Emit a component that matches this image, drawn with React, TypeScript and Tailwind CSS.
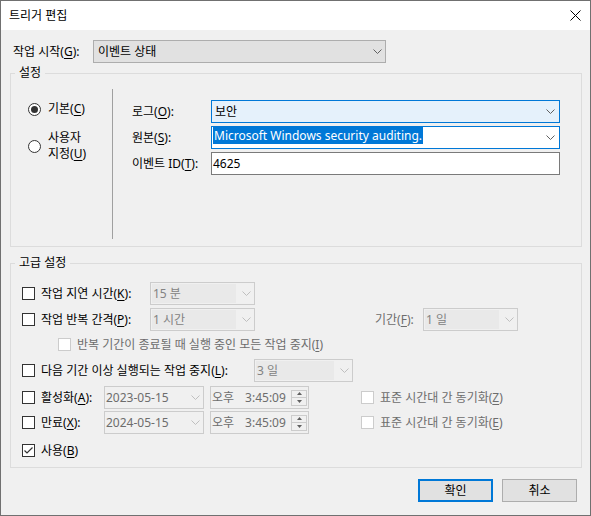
import React from 'react';

function Chevron({ color = '#606060' }: { color?: string }) {
  return (
    <svg width="9" height="5" viewBox="0 0 9 5" className="shrink-0">
      <polyline points="0.5,0.5 4.5,4.5 8.5,0.5" fill="none" stroke={color} strokeWidth="1" />
    </svg>
  );
}

// accelerator key letter
function K({ children }: { children: React.ReactNode }) {
  return <span className="underline decoration-1 underline-offset-[2px]">{children}</span>;
}

function CheckBox({ checked = false, disabled = false }: { checked?: boolean; disabled?: boolean }) {
  return (
    <span
      className={`flex h-[13px] w-[13px] shrink-0 items-center justify-center border bg-white ${
        disabled ? 'border-[#cccccc]' : 'border-[#333333]'
      }`}
    >
      {checked && (
        <svg width="11" height="11" viewBox="0 0 11 11">
          <polyline points="1.5,5.5 4,8 9.5,2.5" fill="none" stroke="#333333" strokeWidth="1.2" />
        </svg>
      )}
    </span>
  );
}

function Radio({ checked = false }: { checked?: boolean }) {
  return (
    <span className="flex h-[13px] w-[13px] shrink-0 items-center justify-center rounded-full border border-[#333333] bg-white">
      {checked && <span className="h-[7px] w-[7px] rounded-full bg-[#333333]" />}
    </span>
  );
}

function DisabledCombo({ text, className }: { text: string; className: string }) {
  return (
    <div className={`flex h-[23px] shrink-0 items-center border border-[#cccccc] bg-[#f0f0f0] pl-[1px] pr-[3px] ${className}`}>
      <span className="h-[19px] flex-1 bg-[#e9e9e9] pl-[1px] leading-[19px] text-[#838383]">{text}</span>
      <span className="ml-[6px]">
        <Chevron color="#bfbfbf" />
      </span>
    </div>
  );
}

function DateBox({ text }: { text: string }) {
  return (
    <div className="flex h-[23px] w-[100px] shrink-0 items-center border border-[#cccccc] pl-[1px] pr-[3px]">
      <span className="flex-1 text-[#6d6d6d]">{text}</span>
      <Chevron color="#bfbfbf" />
    </div>
  );
}

function TimeBox() {
  return (
    <div className="ml-[6px] flex h-[23px] w-[99px] shrink-0 items-center border border-[#cccccc] pl-[1px] pr-[1px] text-[#6d6d6d]">
      <span>오후</span>
      <span className="ml-[11px]">3:45:09</span>
      <div className="ml-auto flex h-[16px] w-[16px] flex-col">
        <span className="flex h-[8px] items-center justify-center border border-[#cccccc] bg-[#f0f0f0]">
          <svg width="5" height="3" viewBox="0 0 5 3">
            <path d="M2.5 0L5 3H0Z" fill="#606060" />
          </svg>
        </span>
        <span className="flex h-[8px] items-center justify-center border border-t-0 border-[#cccccc] bg-[#f0f0f0]">
          <svg width="5" height="3" viewBox="0 0 5 3">
            <path d="M0 0H5L2.5 3Z" fill="#606060" />
          </svg>
        </span>
      </div>
    </div>
  );
}

export default function App() {
  return (
    <div className="flex h-[516px] w-[591px] flex-col overflow-hidden border border-[#707070] bg-[#f0f0f0] font-['Noto_Sans','Noto_Sans_CJK_KR',sans-serif] text-[12px] leading-[16px] text-black">
      {/* title bar */}
      <div className="flex h-[29px] shrink-0 items-center justify-between bg-white pl-[8px] pr-[9px]">
        <span>트리거 편집</span>
        <svg width="11" height="11" viewBox="0 0 11 11">
          <path d="M0.5 0.5L10.5 10.5M10.5 0.5L0.5 10.5" stroke="#000000" strokeWidth="1" />
        </svg>
      </div>

      <div className="flex flex-1 flex-col pl-[9px] pr-[8px]">
        <div className="mt-[10px] flex h-[23px] items-center pl-[3px]">
          <span className="w-[80px] shrink-0">
            작업 시작(<K>G</K>):
          </span>
          <div className="flex h-[23px] w-[293px] items-center border border-[#adadad] bg-[#e1e1e1] pl-[4px] pr-[3px]">
            <span className="flex-1">이벤트 상태</span>
            <Chevron />
          </div>
        </div>

        {/* 설정 */}
        <fieldset className="mt-[2px] border border-[#dcdcdc] pb-[7px] pt-[8px]">
          <legend className="ml-[4px] px-[4px] leading-[16px]">설정</legend>
          <div className="flex">
            <div className="w-[101px] shrink-0 pl-[17px]">
              <div className="mt-[12px] flex h-[16px] items-center">
                <Radio checked />
                <span className="ml-[7px]">
                  기본(<K>C</K>)
                </span>
              </div>
              <div className="mt-[13px] flex items-center">
                <Radio />
                <span className="ml-[7px]">
                  사용자
                  <br />
                  지정(<K>U</K>)
                </span>
              </div>
            </div>
            <div className="h-[150px] w-px shrink-0 bg-[#a0a0a0]" />
            <div className="flex flex-col gap-[3px] pl-[19px] pt-[11px]">
              <div className="flex h-[23px] items-center">
                <span className="w-[79px] shrink-0">
                  로그(<K>O</K>):
                </span>
                <div className="flex h-[23px] w-[349px] items-center border border-[#0078d7] bg-[#e5f1fb] pl-[3px] pr-[4px]">
                  <span className="flex-1">보안</span>
                  <Chevron />
                </div>
              </div>
              <div className="flex h-[23px] items-center">
                <span className="w-[79px] shrink-0">
                  원본(<K>S</K>):
                </span>
                <div className="flex h-[23px] w-[349px] items-start border border-[#0078d7] bg-white pl-[1px] pr-[4px]">
                  <span className="flex-1">
                    <span className="inline-block h-[17px] bg-[#0078d7] pl-[1px] pr-[1px] leading-[17px] text-white">
                      Microsoft Windows security auditing.
                    </span>
                  </span>
                  <span className="self-center">
                    <Chevron />
                  </span>
                </div>
              </div>
              <div className="flex h-[23px] items-center">
                <span className="w-[79px] shrink-0">
                  이벤트 ID(<K>T</K>):
                </span>
                <div className="flex h-[23px] w-[349px] items-center border border-[#7a7a7a] bg-white pl-[1px]">
                  4625
                </div>
              </div>
            </div>
          </div>
        </fieldset>

        {/* 고급 설정 */}
        <fieldset className="mt-[8px] border border-[#dcdcdc] pb-[5px] pt-[11px]">
          <legend className="ml-[4px] px-[4px] leading-[16px]">고급 설정</legend>
          <div className="flex flex-col pl-[11px]">
            <div className="flex h-[23px] items-center">
              <CheckBox />
              <span className="ml-[6px] w-[109px] shrink-0">
                작업 지연 시간(<K>K</K>):
              </span>
              <DisabledCombo text="15 분" className="w-[105px]" />
            </div>

            <div className="mt-[3px] flex h-[23px] items-center">
              <CheckBox />
              <span className="ml-[6px] w-[109px] shrink-0">
                작업 반복 간격(<K>P</K>):
              </span>
              <DisabledCombo text="1 시간" className="w-[105px]" />
              <span className="ml-[120px] w-[48px] shrink-0 text-[#6d6d6d]">
                기간(<K>F</K>):
              </span>
              <DisabledCombo text="1 일" className="w-[95px]" />
            </div>

            <div className="mt-[2px] flex h-[23px] items-center pl-[36px]">
              <CheckBox disabled />
              <span className="ml-[6px] text-[#6d6d6d]">
                반복 기간이 종료될 때 실행 중인 모든 작업 중지(<K>I</K>)
              </span>
            </div>

            <div className="mt-[3px] flex h-[23px] items-center">
              <CheckBox />
              <span className="ml-[6px] w-[213px] shrink-0">
                다음 기간 이상 실행되는 작업 중지(<K>L</K>):
              </span>
              <DisabledCombo text="3 일" className="w-[99px]" />
            </div>

            <div className="mt-[4px] flex h-[23px] items-center">
              <CheckBox />
              <span className="ml-[6px] w-[63px] shrink-0">
                활성화(<K>A</K>):
              </span>
              <DateBox text="2023-05-15" />
              <TimeBox />
              <span className="ml-[52px]">
                <CheckBox disabled />
              </span>
              <span className="ml-[6px] text-[#6d6d6d]">
                표준 시간대 간 동기화(<K>Z</K>)
              </span>
            </div>

            <div className="mt-[2px] flex h-[23px] items-center">
              <CheckBox />
              <span className="ml-[6px] w-[63px] shrink-0">
                만료(<K>X</K>):
              </span>
              <DateBox text="2024-05-15" />
              <TimeBox />
              <span className="ml-[52px]">
                <CheckBox disabled />
              </span>
              <span className="ml-[6px] text-[#6d6d6d]">
                표준 시간대 간 동기화(<K>E</K>)
              </span>
            </div>

            <div className="mt-[5px] flex h-[23px] items-center">
              <CheckBox checked />
              <span className="ml-[6px]">
                사용(<K>B</K>)
              </span>
            </div>
          </div>
        </fieldset>

        <div className="mt-[11px] flex justify-end gap-[9px] pr-[5px]">
          <button className="h-[23px] w-[75px] border-2 border-[#0078d7] bg-[#e1e1e1] leading-[16px]">확인</button>
          <button className="h-[23px] w-[75px] border border-[#adadad] bg-[#e1e1e1] leading-[16px]">취소</button>
        </div>
      </div>
    </div>
  );
}
